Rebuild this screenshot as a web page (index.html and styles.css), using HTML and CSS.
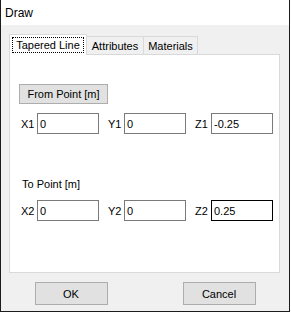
FILE: index.html
```html
<!DOCTYPE html>
<html lang="en">
<head>
  <meta charset="UTF-8">
  <meta name="viewport" content="width=device-width, initial-scale=1.0">
  <title>Draw</title>
  <link rel="stylesheet" href="styles.css">
</head>
<body>
  <div class="window">
    <div class="titlebar">Draw</div>

    <div class="content">
      <div class="tabs">
        <div class="tab active"><span class="focus">Tapered Line</span></div>
        <div class="tab tab-attr">Attributes</div>
        <div class="tab tab-mat">Materials</div>
      </div>

      <div class="panel">
        <button class="btn btn-point">From Point [m]</button>

        <div class="coords">
          <div class="field"><label>X1</label><input type="text" value="0"></div>
          <div class="field"><label>Y1</label><input type="text" value="0"></div>
          <div class="field"><label>Z1</label><input type="text" value="-0.25"></div>
        </div>

        <div class="section-label">To Point [m]</div>

        <div class="coords coords-to">
          <div class="field"><label>X2</label><input type="text" value="0"></div>
          <div class="field"><label>Y2</label><input type="text" value="0"></div>
          <div class="field"><label>Z2</label><input type="text" value="0.25" class="focused"></div>
        </div>
      </div>
    </div>

    <div class="footer">
      <button class="btn btn-dialog">OK</button>
      <button class="btn btn-dialog">Cancel</button>
    </div>
  </div>
</body>
</html>
```

FILE: styles.css
```css
* {
  box-sizing: border-box;
}

body {
  margin: 0;
  background: #fff;
  font-family: 'Liberation Sans', Arial, sans-serif;
  font-size: 11px;
  color: #000;
}

.window {
  width: 290px;
  height: 312px;
  background: #f0f0f0;
  border: 1px solid #1c1c1c;
  border-top: none;
  display: flex;
  flex-direction: column;
}

.titlebar {
  height: 25px;
  background: #fff;
  padding-left: 4px;
  font-size: 12px;
  display: flex;
  align-items: center;
}

.content {
  padding: 9px 0 0 8px;
}

.tabs {
  display: flex;
  align-items: flex-end;
  height: 21px;
  margin-bottom: -1px;
  position: relative;
}

.tab {
  height: 18px;
  margin-bottom: 1px;
  margin-left: -1px;
  border: 1px solid #d9d9d9;
  border-bottom: none;
  background: #f0f0f0;
  display: flex;
  align-items: center;
  justify-content: center;
}

.tab.active {
  width: 78px;
  height: 21px;
  margin-left: 0;
  margin-bottom: 0;
  background: #fff;
}

.tab-attr {
  width: 58px;
}

.tab-mat {
  width: 55px;
}

.focus {
  outline: 1px dotted #000;
  padding: 1px 3px;
}

.panel {
  width: 271px;
  height: 219px;
  background: #fff;
  border: 1px solid #d9d9d9;
  padding: 29px 9px 0 9px;
}

.btn {
  font-family: inherit;
  font-size: 11px;
  color: #000;
  background: #e1e1e1;
  border: 1px solid #adadad;
  padding: 0;
}

.btn-point {
  width: 89px;
  height: 20px;
  display: block;
}

.coords {
  display: grid;
  grid-template-columns: repeat(3, 78px);
  column-gap: 9px;
  margin: 9px 0 0 2px;
}

.field {
  display: flex;
  align-items: center;
}

.field label {
  width: 16px;
}

.field input {
  width: 62px;
  height: 21px;
  border: 1px solid #7a7a7a;
  padding: 0 2px;
  font-family: inherit;
  font-size: 11px;
  color: #000;
}

.field input.focused {
  border-color: #000;
}

.section-label {
  margin: 43px 0 0 3px;
  line-height: 14px;
}

.coords-to {
  margin-top: 9px;
}

.footer {
  display: flex;
  justify-content: center;
  gap: 75px;
  margin-top: 9px;
}

.btn-dialog {
  width: 73px;
  height: 23px;
}
```
